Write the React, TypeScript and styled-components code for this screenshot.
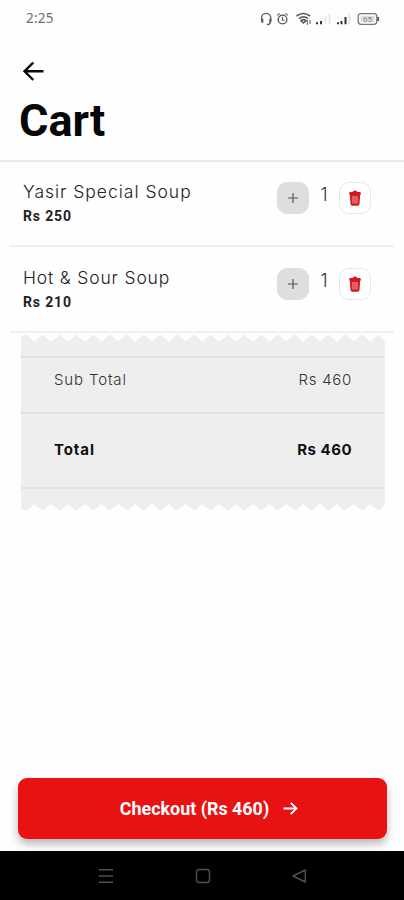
import React from "react";
import styled, { createGlobalStyle } from "styled-components";

const Global = createGlobalStyle`
  * { box-sizing: border-box; }
  body { margin: 0; background: #fefefe; font-family: Inter, sans-serif; }
  button { font: inherit; padding: 0; border: 0; background: none; }
  svg { display: block; flex: none; }
`;

const Screen = styled.div`
  width: 404px;
  height: 900px;
  display: flex;
  flex-direction: column;
  overflow: hidden;
  background: #fefefe;
  color: #111;
`;

const StatusBar = styled.header`
  height: 38px;
  display: flex;
  align-items: center;
  justify-content: space-between;
  padding: 0 24px 0 26px;
`;

const Clock = styled.time`
  font: 400 13.5px/18px "Noto Sans", sans-serif;
  color: #707070;
  letter-spacing: 0.2px;
  margin-top: -2px;
`;

const Header = styled.div`
  height: 124px;
  padding: 21px 20px 0;
  border-bottom: 2px solid #e9e9e9;
`;

const BackButton = styled.button`
  display: block;
  width: 26px;
  height: 26px;
`;

const Title = styled.h1`
  margin: 10px 0 0 -1px;
  font: 700 45px/52px Roboto, sans-serif;
  color: #050505;
`;

const ItemRow = styled.section`
  height: 85px;
  margin: 0 10px;
  padding: 19px 23px 0 13px;
  display: flex;
  align-items: flex-start;
  justify-content: space-between;
  border-bottom: 2px solid #efefef;

  & + & {
    height: 86px;
    padding-top: 20px;
  }
`;

const ItemName = styled.div<{ $spacing: number }>`
  font-size: 17.5px;
  line-height: 22px;
  font-weight: 300;
  letter-spacing: ${(p) => p.$spacing}px;
  color: #222;
  white-space: nowrap;
`;

const ItemPrice = styled.div`
  margin-top: 2px;
  font: 700 14px/22px Roboto, sans-serif;
  letter-spacing: 0.85px;
  color: #222;
`;

const Stepper = styled.div`
  display: flex;
  align-items: flex-start;
  padding-top: 1px;
`;

const SquareButton = styled.button<{ $filled?: boolean }>`
  width: 32px;
  height: 32px;
  display: grid;
  place-items: center;
  border-radius: 10px;
  background: ${(p) => (p.$filled ? "#dedede" : "#fff")};
  border: 1px solid ${(p) => (p.$filled ? "#dedede" : "#e6e6e6")};
`;

const Quantity = styled.span`
  width: 30px;
  padding-top: 1px;
  text-align: center;
  font-size: 18px;
  line-height: 24px;
  font-weight: 300;
  color: #333;
`;

const Receipt = styled.section`
  width: 364px;
  margin: 1px 0 0 21px;
`;

const ReceiptBody = styled.div`
  background: #eee;
`;

const ReceiptLine = styled.div<{ $height: number; $lift: number; $strong?: boolean }>`
  height: ${(p) => p.$height}px;
  display: flex;
  align-items: center;
  justify-content: space-between;
  padding: 0 33px ${(p) => p.$lift}px 33px;
  border-top: 2px solid #e2e2e2;
  font-size: 15px;
  font-weight: ${(p) => (p.$strong ? 700 : 300)};
  letter-spacing: ${(p) => (p.$strong ? 0.5 : 0.7)}px;
  color: ${(p) => (p.$strong ? "#111" : "#333")};
`;

const LineLabel = styled.span<{ $spacing: number }>`
  letter-spacing: ${(p) => p.$spacing}px;
`;

const ReceiptEdge = styled.div<{ $line?: boolean; $height: number }>`
  height: ${(p) => p.$height}px;
  border-top: ${(p) => (p.$line ? "2px solid #e2e2e2" : "0")};
`;

const Footer = styled.div`
  margin-top: auto;
  padding: 0 17px 12px 18px;
`;

const Checkout = styled.button`
  width: 100%;
  height: 61px;
  display: flex;
  align-items: center;
  justify-content: center;
  gap: 14px;
  padding-left: 13px;
  border-radius: 9px;
  background: #e91212;
  color: #fff;
  font: 700 17.9px/24px Roboto, sans-serif;
  box-shadow: 0 5px 9px rgba(0, 0, 0, 0.28);
`;

const NavBar = styled.nav`
  height: 49px;
  display: flex;
  align-items: center;
  gap: 80.5px;
  padding-left: 98px;
  background: #000;
`;

const EDGE_WIDTH = 364;
const TOOTH = 16.8;
const FIRST_TIP = 5;

const Zigzag = ({ flip }: { flip?: boolean }) => {
  const base = flip ? 0 : 8;
  const tip = flip ? 7.8 : 0.4;
  const notch = flip ? 1 : 7.4;
  let d = `M0 ${base}V${flip ? 5.5 : 2.5}`;
  for (let x = FIRST_TIP; x < EDGE_WIDTH; x += TOOTH) {
    d += `L${x} ${tip}L${Math.min(x + TOOTH / 2, EDGE_WIDTH)} ${notch}`;
  }
  d += `L${EDGE_WIDTH} ${flip ? 6 : 3}V${base}Z`;
  return (
    <svg width="364" height="8" viewBox="0 0 364 8">
      <path d={d} fill="#eee" />
    </svg>
  );
};

const StatusIcons = () => (
  <svg width="120" height="14" viewBox="0 0 120 14" fill="none" stroke="#555" strokeWidth="1.3">
    <path d="M1.6 9V6a4.6 4.6 0 0 1 9.2 0v3" />
    <path d="M2.3 6.8v4M10.3 6.8v4" strokeWidth="2" />
    <path d="M10.4 10.5Q10 12.7 6.8 12.5" />
    <circle cx="22.5" cy="7.5" r="4.4" />
    <path d="M22.5 5v3l2 .5M17.2 3.4l2.4-2M27.8 3.4l-2.4-2" strokeWidth="1.1" />
    <path d="M36.5 4Q43.5 -1 50 4M39 6.6Q43.5 3 48 6.6M41 8.8Q43.5 6.6 46 8.8L43.5 11Z" strokeWidth="1.6" />
    <path d="M47.3 8v5M50 8v4" strokeWidth="1" />
    <path d="M57 12.3v-2M61 12.3V9M78 12.3v-2M81.5 12.3V9M85.5 12.3V5" stroke="#333" strokeWidth="2" />
    <path d="M65.5 12V4.5M69.5 12V1.5M89.5 12V1.5" stroke="#e4e4e4" strokeWidth="1.6" />
    <rect x="98.2" y="1.7" width="18.6" height="10.6" rx="2.8" stroke="#777" />
    <path d="M118.2 5v4" stroke="#555" strokeWidth="1.8" />
    <rect x="100.5" y="3.8" width="14" height="6.4" rx="1" fill="#ddd" stroke="none" />
    <text x="103" y="10" fontSize="8" fontFamily="Roboto" fill="#888" stroke="none">65</text>
  </svg>
);

const BackArrow = () => (
  <svg width="26" height="26" viewBox="0 0 26 26" fill="none" stroke="#080808" strokeWidth="2.4">
    <path d="M23.5 12.3H4.5M13.3 3.5L4.5 12.3L13.3 21" />
  </svg>
);

const Plus = () => (
  <svg width="12" height="12" viewBox="0 0 12 12" stroke="#555" strokeWidth="1.2">
    <path d="M6 1v10M1 6h10" />
  </svg>
);

const Trash = () => (
  <svg width="12" height="16" viewBox="0 0 12 16">
    <path d="M3.6 2Q4 .5 6 .5T8.4 2H11Q12 2 12 4.5H0Q0 2 1 2Z" fill="#d51a1f" />
    <path d="M.8 4H11.2L10.5 14Q10.3 15.7 8.8 15.7H3.2Q1.7 15.7 1.5 14Z" fill="#d51a1f" />
    <path d="M4 6v7.5M6 6v7.5M8 6v7.5" stroke="#f1a5a5" strokeWidth="1" />
  </svg>
);

const ForwardArrow = () => (
  <svg width="15" height="14" viewBox="0 0 15 14" fill="none" stroke="#fff" strokeWidth="1.8">
    <path d="M.5 6.5H13M7.7 .8L13.5 6.5L7.7 12.2" />
  </svg>
);

const NavIcon = ({ children }: { children: React.ReactNode }) => (
  <svg width="16" height="16" viewBox="0 0 16 16" fill="none" stroke="#505050" strokeWidth="1.4">
    {children}
  </svg>
);

const items = [
  { name: "Yasir Special Soup", price: 250, quantity: 1, spacing: 0.99 },
  { name: "Hot & Sour Soup", price: 210, quantity: 1, spacing: 0.84 },
];

export default function App() {
  const total = items.reduce((sum, item) => sum + item.price * item.quantity, 0);
  return (
    <>
      <Global />
      <Screen>
        <StatusBar>
          <Clock>2:25</Clock>
          <StatusIcons />
        </StatusBar>
        <Header>
          <BackButton aria-label="Back"><BackArrow /></BackButton>
          <Title>Cart</Title>
        </Header>
        {items.map((item) => (
          <ItemRow key={item.name}>
            <div>
              <ItemName $spacing={item.spacing}>{item.name}</ItemName>
              <ItemPrice>Rs {item.price}</ItemPrice>
            </div>
            <Stepper>
              <SquareButton $filled aria-label="Add one"><Plus /></SquareButton>
              <Quantity>{item.quantity}</Quantity>
              <SquareButton aria-label="Remove"><Trash /></SquareButton>
            </Stepper>
          </ItemRow>
        ))}
        <Receipt>
          <Zigzag />
          <ReceiptBody>
            <ReceiptEdge $height={14} />
            <ReceiptLine $height={56} $lift={11}>
              <LineLabel $spacing={0.85}>Sub Total</LineLabel>
              <span>Rs {total}</span>
            </ReceiptLine>
            <ReceiptLine $height={75} $lift={3} $strong>
              <LineLabel $spacing={0.9}>Total</LineLabel>
              <span>Rs {total}</span>
            </ReceiptLine>
            <ReceiptEdge $height={16} $line />
          </ReceiptBody>
          <Zigzag flip />
        </Receipt>
        <Footer>
          <Checkout>Checkout (Rs {total})<ForwardArrow /></Checkout>
        </Footer>
        <NavBar>
          <NavIcon><path d="M1 1.7h14M1 8h14M1 14.3h14" /></NavIcon>
          <NavIcon><rect x="1.5" y="1.5" width="13" height="13" rx="2.5" /></NavIcon>
          <NavIcon><path d="M14.3 2v12L2 8Z" strokeLinejoin="round" /></NavIcon>
        </NavBar>
      </Screen>
    </>
  );
}
